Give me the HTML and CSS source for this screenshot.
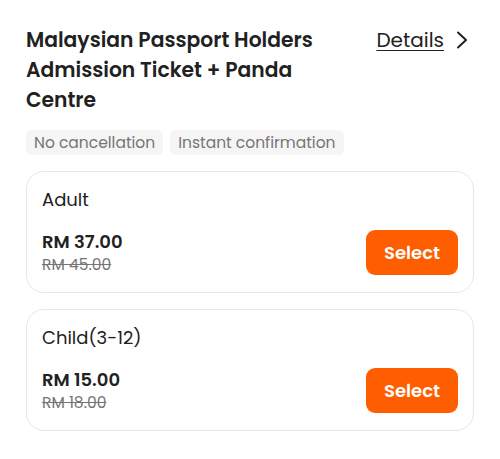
FILE: index.html
```html
<!DOCTYPE html>
<html lang="en">
<head>
<meta charset="utf-8">
<link rel="stylesheet" href="styles.css">
</head>
<body>
<div class="page">
  <div class="head">
    <h1 class="title">Malaysian Passport Holders Admission Ticket + Panda Centre</h1>
    <a class="details" href="#">Details <svg class="chev" width="14" height="20" viewBox="0 0 14 20"><path d="M3 2.5 L11 10 L3 17.5" fill="none" stroke="#222" stroke-width="2" stroke-linecap="round" stroke-linejoin="round"/></svg></a>
  </div>
  <div class="tags">
    <span class="tag">No cancellation</span>
    <span class="tag">Instant confirmation</span>
  </div>
  <div class="card">
    <div class="name">Adult</div>
    <div class="row">
      <div class="prices">
        <div class="price">RM 37.00</div>
        <div class="old">RM 45.00</div>
      </div>
      <button class="select">Select</button>
    </div>
  </div>
  <div class="card">
    <div class="name">Child(3-12)</div>
    <div class="row">
      <div class="prices">
        <div class="price">RM 15.00</div>
        <div class="old">RM 18.00</div>
      </div>
      <button class="select">Select</button>
    </div>
  </div>
</div>
</body>
</html>
```
FILE: styles.css
```css
* { box-sizing: border-box; }
html, body { margin: 0; background: #fff; }
body { font-family: "Poppins", "Inter", "Noto Sans", sans-serif; color: #212121; }
.page { padding: 25px 26px 0 26px; }
.head { display: flex; justify-content: space-between; align-items: flex-start; }
.title { margin: 0; font-size: 20.3px; line-height: 30px; font-weight: 600; width: 310px; letter-spacing: 0; }
.details { display: flex; align-items: center; gap: 11px; color: #212121; font-size: 20px; line-height: 30px; text-decoration: underline; text-underline-offset: 3px; text-decoration-thickness: 1px; margin-right: 5px; }
.chev { display: block; }
.tags { display: flex; gap: 7px; margin-top: 15px; }
.tag { background: #f5f5f5; color: #757575; font-size: 15.5px; line-height: 25px; padding: 0 8px; border-radius: 6px; }
.card { margin-top: 16px; border: 1px solid #e6e6e6; border-radius: 18px; padding: 15px 15px 16px 15px; }
.name { font-size: 18px; line-height: 26px; }
.row { display: flex; justify-content: space-between; align-items: center; margin-top: 16px; }
.price { font-size: 18px; line-height: 25px; font-weight: 600; }
.old { font-size: 15.5px; line-height: 22px; color: #757575; text-decoration: line-through; }
.select { border: 0; background: #ff5e00; color: #fff; font-family: inherit; font-size: 18px; font-weight: 600; width: 92px; height: 45px; border-radius: 9px; padding: 0; }
```
